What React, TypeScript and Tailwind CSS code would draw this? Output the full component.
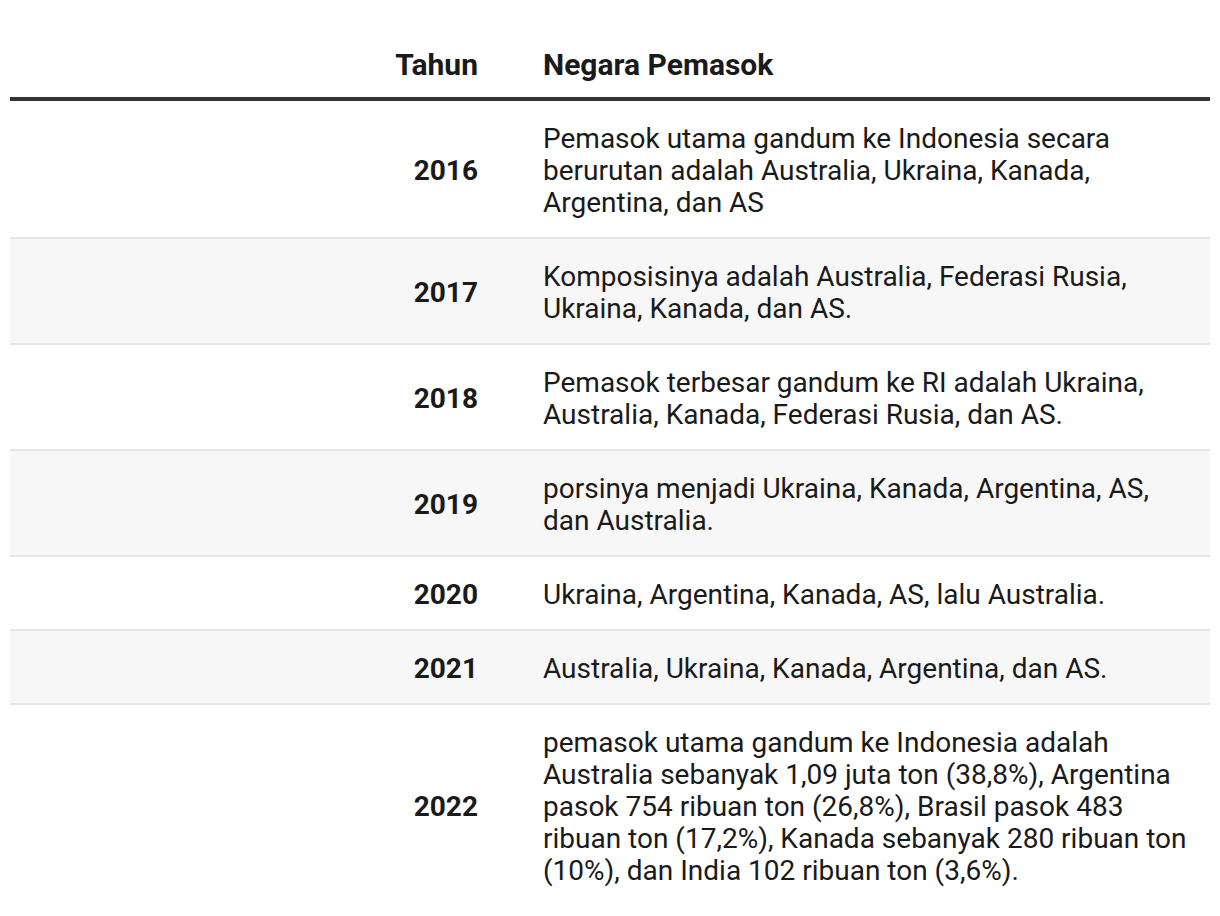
import React from "react";

const rows: [string, string][] = [
  ["2016", "Pemasok utama gandum ke Indonesia secara berurutan adalah Australia, Ukraina, Kanada, Argentina, dan AS"],
  ["2017", "Komposisinya adalah Australia, Federasi Rusia, Ukraina, Kanada, dan AS."],
  ["2018", "Pemasok terbesar gandum ke RI adalah Ukraina, Australia, Kanada, Federasi Rusia, dan AS."],
  ["2019", "porsinya menjadi Ukraina, Kanada, Argentina, AS, dan Australia."],
  ["2020", "Ukraina, Argentina, Kanada, AS, lalu Australia."],
  ["2021", "Australia, Ukraina, Kanada, Argentina, dan AS."],
  ["2022", "pemasok utama gandum ke Indonesia adalah Australia sebanyak 1,09 juta ton (38,8%), Argentina pasok 754 ribuan ton (26,8%), Brasil pasok 483 ribuan ton (17,2%), Kanada sebanyak 280 ribuan ton (10%), dan India 102 ribuan ton (3,6%)."],
];

export default function App() {
  return (
    <div className="min-h-[916px] bg-white px-[10px] pt-[27px] text-[#1a1a1a]" style={{ fontFamily: "Roboto, 'Noto Sans', sans-serif" }}>
      <div className="grid grid-cols-[500px_1fr] border-b-4 border-[#333333]">
        <div className="pt-[22px] pb-[16px] pr-[32px] text-right text-[30px] font-bold leading-[32px]">Tahun</div>
        <div className="pt-[22px] pb-[16px] pl-[33px] pr-[20px] text-[30px] font-bold leading-[32px]">Negara Pemasok</div>
      </div>
      {rows.map(([y, t], i) => (
        <div
          key={y}
          className={`grid grid-cols-[500px_1fr] items-center ${i === rows.length - 1 ? "" : "border-b-2 border-[#e6e6e6]"} ${i % 2 === 1 ? "bg-[#f7f7f7]" : "bg-white"}`}
        >
          <div className="pt-[22px] pb-[18px] pr-[32px] text-right text-[28px] font-bold leading-[32px]">{y}</div>
          <div className="pt-[22px] pb-[18px] pl-[33px] pr-[20px] text-[28px] leading-[32px]">{t}</div>
        </div>
      ))}
    </div>
  );
}
